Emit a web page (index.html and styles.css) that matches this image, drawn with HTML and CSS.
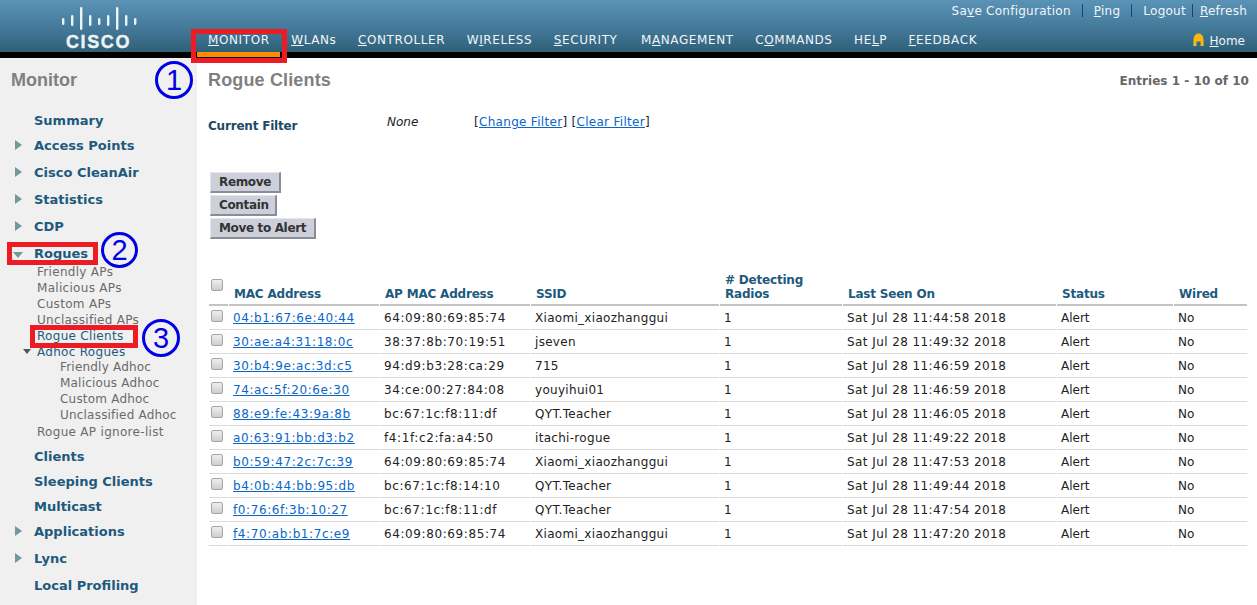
FILE: index.html
```html
<!DOCTYPE html>
<html lang="en">
<head>
<meta charset="utf-8">
<title>Rogue Clients</title>
<link rel="stylesheet" href="styles.css">
</head>
<body>
<header class="top">
  <div class="logo">
    <svg class="logo-bars" width="76" height="23" viewBox="0 0 76 23">
      <g fill="#eef3f6">
        <rect x="1" y="11" width="2.4" height="7" rx="1.2"/>
        <rect x="10" y="8" width="2.4" height="11" rx="1.2"/>
        <rect x="19" y="0" width="2.4" height="23" rx="1.2"/>
        <rect x="28" y="8" width="2.4" height="11" rx="1.2"/>
        <rect x="37" y="11" width="2.4" height="7" rx="1.2"/>
        <rect x="46" y="8" width="2.4" height="11" rx="1.2"/>
        <rect x="55" y="0" width="2.4" height="23" rx="1.2"/>
        <rect x="64" y="8" width="2.4" height="11" rx="1.2"/>
        <rect x="73" y="11" width="2.4" height="7" rx="1.2"/>
      </g>
    </svg>
    <span class="logo-word">CISCO</span>
  </div>
  <div class="top-main">
    <nav class="util">
      <a>Sa<u>v</u>e Configuration</a><i class="sep wide"></i>
      <a><u>P</u>ing</a><i class="sep wide"></i>
      <a>Lo<u>g</u>out</a><i class="sep"></i>
      <a><u>R</u>efresh</a>
    </nav>
    <nav class="menu">
      <a class="menu-item active"><u>M</u>ONITOR</a>
      <a class="menu-item"><u>W</u>LANs</a>
      <a class="menu-item"><u>C</u>ONTROLLER</a>
      <a class="menu-item">W<u>I</u>RELESS</a>
      <a class="menu-item"><u>S</u>ECURITY</a>
      <a class="menu-item mgmt">M<u>A</u>NAGEMENT</a>
      <a class="menu-item">C<u>O</u>MMANDS</a>
      <a class="menu-item">HE<u>L</u>P</a>
      <a class="menu-item"><u>F</u>EEDBACK</a>
      <a class="home">
        <svg width="11" height="13" viewBox="0 0 11 13"><path d="M5.5 0.5 C2.5 0.5 0.8 3 0.5 6.5 L0.3 13 H3.5 V8.5 H7.5 V13 H10.7 L10.5 6.5 C10.2 3 8.5 0.5 5.5 0.5Z" fill="#f5b90f"/></svg>
        <span><u>H</u>ome</span>
      </a>
    </nav>
  </div>
</header>
<div class="page">
  <aside class="side">
    <h2 class="side-title">Monitor</h2>
    <ul class="tree">
      <li class="l1">Summary</li>
      <li class="l1 arrow">Access Points</li>
      <li class="l1 arrow">Cisco CleanAir</li>
      <li class="l1 arrow">Statistics</li>
      <li class="l1 arrow">CDP</li>
      <li class="l1 open">Rogues</li>
      <li class="l2">Friendly APs</li>
      <li class="l2">Malicious APs</li>
      <li class="l2">Custom APs</li>
      <li class="l2">Unclassified APs</li>
      <li class="l2 cur">Rogue Clients</li>
      <li class="l2 cur sub-open">Adhoc Rogues</li>
      <li class="l3">Friendly Adhoc</li>
      <li class="l3">Malicious Adhoc</li>
      <li class="l3">Custom Adhoc</li>
      <li class="l3">Unclassified Adhoc</li>
      <li class="l2 ignore">Rogue AP ignore-list</li>
      <li class="l1">Clients</li>
      <li class="l1">Sleeping Clients</li>
      <li class="l1">Multicast</li>
      <li class="l1 arrow">Applications</li>
      <li class="l1 arrow">Lync</li>
      <li class="l1">Local Profiling</li>
    </ul>
  </aside>
  <main class="main">
    <div class="title-row">
      <h1>Rogue Clients</h1>
      <span class="entries">Entries 1 - 10 of 10</span>
    </div>
    <div class="filter-row">
      <b class="filter-label">Current Filter</b>
      <em class="filter-val">None</em>
      <span class="filter-links">[<a>Change Filter</a>] [<a>Clear Filter</a>]</span>
    </div>
    <div class="buttons">
      <button class="btn">Remove</button>
      <button class="btn btn-contain">Contain</button>
      <button class="btn">Move to Alert</button>
    </div>
    <table class="grid">
      <colgroup>
        <col class="c0"><col class="c1"><col class="c2"><col class="c3"><col class="c4"><col class="c5"><col class="c6"><col class="c7">
      </colgroup>
      <thead>
        <tr><th class="chk"><span class="box"></span></th><th>MAC Address</th><th>AP MAC Address</th><th>SSID</th><th># Detecting<br>Radios</th><th>Last Seen On</th><th>Status</th><th>Wired</th></tr>
      </thead>
      <tbody>
        <tr><td class="chk"><span class="box"></span></td><td class="mac"><a>04:b1:67:6e:40:44</a></td><td class="mac">64:09:80:69:85:74</td><td class="ssid">Xiaomi_xiaozhanggui</td><td>1</td><td class="seen">Sat Jul 28 11:44:58 2018</td><td>Alert</td><td>No</td></tr>
        <tr><td class="chk"><span class="box"></span></td><td class="mac"><a>30:ae:a4:31:18:0c</a></td><td class="mac">38:37:8b:70:19:51</td><td class="ssid">jseven</td><td>1</td><td class="seen">Sat Jul 28 11:49:32 2018</td><td>Alert</td><td>No</td></tr>
        <tr><td class="chk"><span class="box"></span></td><td class="mac"><a>30:b4:9e:ac:3d:c5</a></td><td class="mac">94:d9:b3:28:ca:29</td><td class="ssid">715</td><td>1</td><td class="seen">Sat Jul 28 11:46:59 2018</td><td>Alert</td><td>No</td></tr>
        <tr><td class="chk"><span class="box"></span></td><td class="mac"><a>74:ac:5f:20:6e:30</a></td><td class="mac">34:ce:00:27:84:08</td><td class="ssid">youyihui01</td><td>1</td><td class="seen">Sat Jul 28 11:46:59 2018</td><td>Alert</td><td>No</td></tr>
        <tr><td class="chk"><span class="box"></span></td><td class="mac"><a>88:e9:fe:43:9a:8b</a></td><td class="mac">bc:67:1c:f8:11:df</td><td class="ssid">QYT.Teacher</td><td>1</td><td class="seen">Sat Jul 28 11:46:05 2018</td><td>Alert</td><td>No</td></tr>
        <tr><td class="chk"><span class="box"></span></td><td class="mac"><a>a0:63:91:bb:d3:b2</a></td><td class="mac">f4:1f:c2:fa:a4:50</td><td class="ssid">itachi-rogue</td><td>1</td><td class="seen">Sat Jul 28 11:49:22 2018</td><td>Alert</td><td>No</td></tr>
        <tr><td class="chk"><span class="box"></span></td><td class="mac"><a>b0:59:47:2c:7c:39</a></td><td class="mac">64:09:80:69:85:74</td><td class="ssid">Xiaomi_xiaozhanggui</td><td>1</td><td class="seen">Sat Jul 28 11:47:53 2018</td><td>Alert</td><td>No</td></tr>
        <tr><td class="chk"><span class="box"></span></td><td class="mac"><a>b4:0b:44:bb:95:db</a></td><td class="mac">bc:67:1c:f8:14:10</td><td class="ssid">QYT.Teacher</td><td>1</td><td class="seen">Sat Jul 28 11:49:44 2018</td><td>Alert</td><td>No</td></tr>
        <tr><td class="chk"><span class="box"></span></td><td class="mac"><a>f0:76:6f:3b:10:27</a></td><td class="mac">bc:67:1c:f8:11:df</td><td class="ssid">QYT.Teacher</td><td>1</td><td class="seen">Sat Jul 28 11:47:54 2018</td><td>Alert</td><td>No</td></tr>
        <tr><td class="chk"><span class="box"></span></td><td class="mac"><a>f4:70:ab:b1:7c:e9</a></td><td class="mac">64:09:80:69:85:74</td><td class="ssid">Xiaomi_xiaozhanggui</td><td>1</td><td class="seen">Sat Jul 28 11:47:20 2018</td><td>Alert</td><td>No</td></tr>
      </tbody>
    </table>
  </main>
</div>
<div class="mark box-monitor"></div>
<div class="mark box-rogues"></div>
<div class="mark box-clients"></div>
<div class="num num1">1</div>
<div class="num num2">2</div>
<div class="num num3">3</div>
</body>
</html>
```
FILE: styles.css
```css
* { box-sizing: border-box; }
html, body { margin: 0; height: 100%; overflow: hidden; }
body { font-family: "DejaVu Sans", Verdana, sans-serif; font-size: 12px; color: #222; background: #fff; }
ul { list-style: none; margin: 0; padding: 0; }
h1, h2 { margin: 0; }

.top { display: flex; height: 58px; background: linear-gradient(#5a93b6 0, #467c9e 25px, #2f6078 52px); border-bottom: 6px solid #000; color: #f2f6f8; }
.logo { width: 197px; display: flex; flex-direction: column; align-items: center; padding-top: 7px; }
.logo-bars { display: block; }
.logo-word { font-family: "Liberation Sans", Arial, sans-serif; font-weight: bold; font-size: 18px; line-height: 17px; letter-spacing: 1.6px; color: #eef3f6; margin-top: 4px; -webkit-text-stroke: 0.4px #eef3f6; }
.top-main { flex: 1; display: flex; flex-direction: column; }
.util { display: flex; justify-content: flex-end; align-items: center; height: 21px; padding-right: 10px; font-size: 12px; letter-spacing: 0.25px; }
.sep { width: 1px; height: 13px; background: #1e3f70; margin: 0 6.5px; }
.sep.wide { margin: 0 11px; }
.menu { flex: 1; display: flex; align-items: flex-start; padding: 12px 12px 0 11px; letter-spacing: 0.6px; }
.menu-item { position: relative; margin-right: 21.5px; line-height: 15px; white-space: nowrap; }
.menu-item.mgmt { margin-left: 2px; }
.menu-item.active::after { content: ""; position: absolute; left: -11px; right: -10px; top: 19px; height: 5px; background: #ff8c00; }
.home { margin-left: auto; display: flex; align-items: center; gap: 6px; line-height: 15px; letter-spacing: 0; margin-top: 1px; }
.home svg { margin-top: -5px; }

.page { display: flex; height: 547px; }
.side { width: 197px; background: #f0f0f0; flex: none; }
.side-title { font-family: "Liberation Sans", Arial, sans-serif; font-size: 18px; font-weight: bold; color: #808080; padding: 11px 0 0 11px; line-height: 22px; height: 50px; }
.tree { padding-left: 34px; }
.l1 { position: relative; font-weight: bold; font-size: 13px; color: #1d5a7d; line-height: 25px; height: 25px; }
.l1.arrow { height: 27px; }
.l1.arrow::before { content: ""; position: absolute; left: -19px; top: 7px; border-left: 7px solid #6d9b9b; border-top: 5.5px solid transparent; border-bottom: 5.5px solid transparent; }
.l1.open { height: 23px; line-height: 26px; }
.l1.open::before { content: ""; position: absolute; left: -21px; top: 11px; border-top: 6px solid #6d9b9b; border-left: 5px solid transparent; border-right: 5px solid transparent; }
.l2 { position: relative; font-size: 12px; color: #6a6a6a; line-height: 16px; height: 16px; margin-left: 3px; letter-spacing: 0.3px; }
.l2.cur { color: #1d5a7d; }
.l2.sub-open { height: 15px; }
.sub-open::before { content: ""; position: absolute; left: -14px; top: 5px; border-top: 5px solid #555; border-left: 4px solid transparent; border-right: 4px solid transparent; }
.l3 { font-size: 12px; color: #6a6a6a; line-height: 16px; height: 16px; margin-left: 26px; letter-spacing: 0.2px; }
.ignore { margin: 1px 0 4px 3px; }

.main { flex: 1; padding: 0 10px 0 11px; }
.title-row { display: flex; justify-content: space-between; align-items: center; height: 44px; }
.title-row h1 { font-family: "Liberation Sans", Arial, sans-serif; font-size: 18px; font-weight: bold; color: #808080; letter-spacing: 0.15px; }
.entries { font-weight: bold; font-size: 12px; color: #666; margin: 1px -1px 0 0; letter-spacing: 0.03px; }
.filter-row { display: flex; align-items: center; height: 20px; margin-top: 14px; }
.filter-label { width: 179px; color: #1d4a66; font-size: 12px; letter-spacing: -0.2px; }
.filter-val { width: 87px; font-size: 12px; color: #222; margin-top: -8px; }
.filter-links { margin-top: -8px; letter-spacing: 0.3px; }
a { text-decoration: none; }
.filter-links a, td a { color: #0a66c8; text-decoration: underline; }
.buttons { display: flex; flex-direction: column; align-items: flex-start; gap: 2px; margin: 36px 0 0 2px; }
.btn { font: bold 12px "DejaVu Sans", Verdana, sans-serif; letter-spacing: -0.35px; color: #333; background: #cdd0db; height: 21px; padding: 0 8px; border: 1px solid #e4e6ec; border-right: 2px solid #8a8c96; border-bottom: 2px solid #8a8c96; border-radius: 0; line-height: 17px; }
.btn-contain { padding-right: 6px; }

.grid { border-collapse: separate; border-spacing: 1px 0; table-layout: fixed; width: 1040px; margin-top: 29px; }
.c0 { width: 19px; } .c1 { width: 150px; } .c2 { width: 150px; } .c3 { width: 188px; } .c4 { width: 122px; } .c5 { width: 213px; } .c6 { width: 116px; } .c7 { width: 73px; }
.grid th { text-align: left; vertical-align: bottom; font-weight: bold; font-size: 12px; line-height: 14px; letter-spacing: -0.2px; color: #1d5a7d; padding: 0 0 3px 5px; border-bottom: 2px solid #c4c4c4; height: 38px; }
.grid td { height: 24px; padding: 0 0 0 4px; border-bottom: 1px solid #d8d8d8; color: #222; white-space: nowrap; }
.grid td.mac { letter-spacing: 0.6px; }
.grid td.ssid { letter-spacing: 0.3px; }
.grid td.seen { letter-spacing: 0.42px; }
.grid th.chk, .grid td.chk { padding-left: 2px; }
.grid th.chk { vertical-align: top; padding-top: 11px; }
.box { display: block; width: 12px; height: 12px; border: 1px solid #a5a5a5; border-radius: 2px; background: linear-gradient(#eee, #cfcfcf); }
td .box { margin-top: -3px; }

.mark { position: absolute; border: 5px solid #ed1c24; }
.box-monitor { left: 191px; top: 29px; width: 96px; height: 34px; }
.box-rogues { left: 7px; top: 242px; width: 91px; height: 23px; }
.box-clients { left: 30px; top: 325px; width: 108px; height: 23px; }
.num { position: absolute; width: 38px; height: 38px; border: 3px solid #0000e6; border-radius: 50%; color: #0000e6; font-family: "Liberation Sans", Arial, sans-serif; font-size: 29px; line-height: 32px; text-align: center; }
.num1 { left: 155px; top: 61px; }
.num2 { left: 101px; top: 232px; width: 37px; height: 36px; line-height: 30px; }
.num3 { left: 142px; top: 319px; }
```
